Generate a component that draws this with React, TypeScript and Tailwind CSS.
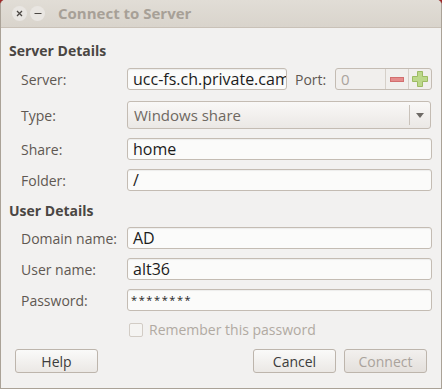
import React from "react";

const font = { fontFamily: '"Open Sans", "Noto Sans", sans-serif' };

function Label({ children }: { children: React.ReactNode }) {
  return <div className="w-[126px] shrink-0 pl-[20px] text-[14px] leading-[21px] text-[#5f5852] whitespace-nowrap">{children}</div>;
}

function Entry({ value, className = "" }: { value: string; className?: string }) {
  return (
    <div
      className={`h-[22px] flex items-center overflow-hidden whitespace-nowrap rounded-[3px] border border-[#c4bcb3] bg-[#fbfbfa] px-[5px] text-[16px] text-[#1c1c1c] shadow-[inset_0_1px_1px_rgba(0,0,0,0.06)] ${className}`}
    >
      {value}
    </div>
  );
}

function Row({ label, children, className = "" }: { label: string; children: React.ReactNode; className?: string }) {
  return (
    <div className={`flex items-center ${className}`}>
      <Label>{label}</Label>
      {children}
    </div>
  );
}

function Button({ label, disabled = false, className = "" }: { label: string; disabled?: boolean; className?: string }) {
  return (
    <div
      className={`h-[24px] w-[83px] flex items-center justify-center rounded-[3px] border border-[#bdb5ac] text-[14px] ${
        disabled
          ? "bg-gradient-to-b from-[#f2f0ee] to-[#e4e0dc] text-[#aaa39c]"
          : "bg-gradient-to-b from-[#fafaf9] to-[#ebe8e5] text-[#3c3c3c]"
      } ${className}`}
    >
      {label}
    </div>
  );
}

export default function App() {
  return (
    <div className="w-[442px] h-[389px] bg-[#a12a2a]" style={font}>
      <div className="w-[442px] h-[389px] flex flex-col rounded-t-[5px] overflow-hidden border-x border-b border-[#aaa297] bg-[#f2f1f0]">
        {/* title bar */}
        <div className="h-[28px] shrink-0 flex items-center border-b border-[#c9c1b7] bg-gradient-to-b from-[#e1ddd6] to-[#d9d4cc] pl-[11px]">
          <div className="w-[15px] h-[15px] rounded-full bg-[#e9e6e2] flex items-center justify-center">
            <svg width="7" height="7" viewBox="0 0 7 7">
              <path d="M1 1L6 6M6 1L1 6" stroke="#4c4844" strokeWidth="1.3" />
            </svg>
          </div>
          <div className="ml-[3px] w-[15px] h-[15px] rounded-full bg-[#e9e6e2] flex items-center justify-center">
            <svg width="8" height="7" viewBox="0 0 8 7">
              <path d="M0.5 3.5H7.5" stroke="#4c4844" strokeWidth="1.2" />
            </svg>
          </div>
          <div className="ml-[13px] text-[15px] font-bold text-[#a7a097]">Connect to Server</div>
        </div>

        {/* server details */}
        <div className="mt-[12px] pl-[8px] text-[14px] leading-[21px] font-bold text-[#4a4643]">Server Details</div>
        <Row label="Server:" className="mt-[7px]">
          <Entry value="ucc-fs.ch.private.cam" className="w-[160px]" />
          <div className="ml-[8px] w-[40px] text-[14px] text-[#5f5852]">Port:</div>
          <div className="h-[22px] w-[97px] flex rounded-[3px] border border-[#c4bcb3] bg-[#f1efed]">
            <div className="flex-1 flex items-center px-[5px] text-[15px] text-[#aaa49d]">0</div>
            <div className="w-[23px] flex items-center justify-center border-l border-[#d6d0c9]">
              <div className="w-[14px] h-[5px] bg-[#e58c8c] border border-[#d26f6f]" />
            </div>
            <div className="w-[23px] flex items-center justify-center border-l border-[#d6d0c9]">
              <svg width="16" height="16" viewBox="0 0 16 16">
                <path d="M5.5 0.5H10.5V5.5H15.5V10.5H10.5V15.5H5.5V10.5H0.5V5.5H5.5Z" fill="#bcd88a" stroke="#9dbb63" />
              </svg>
            </div>
          </div>
        </Row>
        <Row label="Type:" className="mt-[11px]">
          <div className="h-[28px] w-[304px] flex items-center rounded-[3px] border border-[#c4bcb3] bg-gradient-to-b from-[#f9f8f7] to-[#ebe8e5]">
            <div className="flex-1 pl-[6px] text-[15px] text-[#6e6861]">Windows share</div>
            <div className="w-[21px] h-[20px] flex items-center justify-center border-l border-[#c9c2ba]">
              <svg width="8" height="5" viewBox="0 0 8 5">
                <path d="M0 0H8L4 5Z" fill="#6e6a66" />
              </svg>
            </div>
          </div>
        </Row>
        <Row label="Share:" className="mt-[9px]">
          <Entry value="home" className="w-[305px]" />
        </Row>
        <Row label="Folder:" className="mt-[9px]">
          <Entry value="/" className="w-[305px]" />
        </Row>

        {/* user details */}
        <div className="mt-[9px] pl-[8px] text-[14px] leading-[21px] font-bold text-[#4a4643]">User Details</div>
        <Row label="Domain name:" className="mt-[6px]">
          <Entry value="AD" className="w-[305px]" />
        </Row>
        <Row label="User name:" className="mt-[9px]">
          <Entry value="alt36" className="w-[305px]" />
        </Row>
        <Row label="Password:" className="mt-[9px]">
          <Entry value="********" className="w-[305px] !px-[3px] !text-[11px] tracking-[1.6px]" />
        </Row>

        <div className="mt-[8px] h-[21px] flex items-center pl-[128px]">
          <div className="w-[14px] h-[14px] rounded-[2px] border border-[#d2ccc5] bg-[#f5f4f2]" />
          <div className="ml-[6px] text-[14px] leading-[21px] text-[#b1aaa2]">Remember this password</div>
        </div>

        <div className="mt-[9px] flex px-[14px]">
          <Button label="Help" />
          <div className="flex-1" />
          <Button label="Cancel" />
          <Button label="Connect" disabled className="ml-[8px]" />
        </div>
      </div>
    </div>
  );
}
